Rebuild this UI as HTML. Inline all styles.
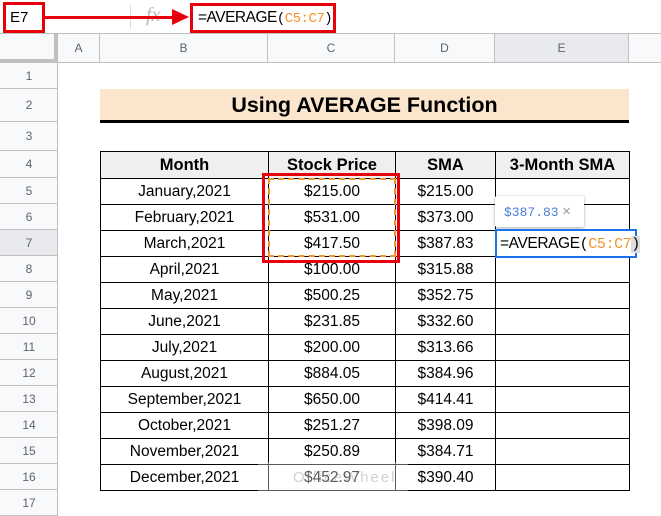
<!DOCTYPE html>
<html><head><style>
*{margin:0;padding:0;box-sizing:border-box}
body{width:661px;height:516px;overflow:hidden;background:#fff;font-family:"Liberation Sans",Arial,sans-serif;position:relative}
.a{position:absolute}
.rn{position:absolute;left:0;width:58px;text-align:center;font-size:12px;color:#5f6368;border-bottom:1px solid #c0c0c0;background:#f8f9fa}
.ch{position:absolute;top:34px;height:29px;line-height:28px;text-align:center;font-size:12px;color:#5f6368;border-right:1px solid #c0c0c0;border-bottom:1px solid #c0c0c0;background:#f8f9fa}
table{position:absolute;left:100px;top:151px;border-collapse:collapse}
td{border:1px solid #000;height:26px;text-align:center;font-size:15.5px;color:#000;padding:0}
th{border:1px solid #000;height:27px;background:#efefef;font-size:16.5px;font-weight:bold;padding:0}
.mono{font-family:"Liberation Mono",monospace}
</style></head><body>
<div class="a" style="left:0;top:0;width:661px;height:34px;border-bottom:1px solid #c0c0c0"></div>
<div class="a" style="left:3px;top:2px;width:42px;height:31px;border:3px solid #e8000b;font-size:15px;line-height:25px;padding-left:4px">E7</div>
<div class="a" style="left:113px;top:16px;width:0;height:0;border-left:3px solid transparent;border-right:3px solid transparent;border-top:3px solid #777"></div>
<div class="a" style="left:130px;top:5px;width:1px;height:24px;background:#ddd"></div>
<div class="a" style="left:146px;top:4px;font-size:20px;font-style:italic;color:#bbb;font-family:'Liberation Serif',serif">fx</div>
<div class="a" style="left:45px;top:16px;width:128px;height:3px;background:#e8000b"></div>
<div class="a" style="left:172px;top:9px;width:0;height:0;border-top:8px solid transparent;border-bottom:8px solid transparent;border-left:17px solid #e8000b"></div>
<div class="a" style="left:190px;top:3px;width:146px;height:30px;border:3px solid #e8000b;font-size:15.5px;line-height:24px;padding-left:5px;letter-spacing:-0.5px">=AVERAGE<span class="mono" style="font-size:14px">(</span><span class="mono" style="color:#f0962d;font-size:14px">C5:C7</span><span class="mono" style="font-size:14px">)</span></div>
<div class="ch" style="left:0;width:58px;border-right:4px solid #c0c0c0;border-bottom:4px solid #c0c0c0"></div>
<div class="ch" style="left:58px;width:42px">A</div>
<div class="ch" style="left:100px;width:168px">B</div>
<div class="ch" style="left:268px;width:127px">C</div>
<div class="ch" style="left:395px;width:100px">D</div>
<div class="ch" style="left:495px;width:134px;background:#e8eaed">E</div>
<div class="ch" style="left:629px;width:40px"></div>
<div class="rn" style="top:63px;height:26px;line-height:26px">1</div>
<div class="rn" style="top:89px;height:33px;line-height:33px">2</div>
<div class="rn" style="top:122px;height:29px;line-height:29px">3</div>
<div class="rn" style="top:151px;height:27px;line-height:27px">4</div>
<div class="rn" style="top:178px;height:26px;line-height:26px">5</div>
<div class="rn" style="top:204px;height:26px;line-height:26px">6</div>
<div class="rn" style="top:230px;height:26px;line-height:26px;background:#e8eaed">7</div>
<div class="rn" style="top:256px;height:26px;line-height:26px">8</div>
<div class="rn" style="top:282px;height:26px;line-height:26px">9</div>
<div class="rn" style="top:308px;height:26px;line-height:26px">10</div>
<div class="rn" style="top:334px;height:26px;line-height:26px">11</div>
<div class="rn" style="top:360px;height:26px;line-height:26px">12</div>
<div class="rn" style="top:386px;height:26px;line-height:26px">13</div>
<div class="rn" style="top:412px;height:26px;line-height:26px">14</div>
<div class="rn" style="top:438px;height:26px;line-height:26px">15</div>
<div class="rn" style="top:464px;height:26px;line-height:26px">16</div>
<div class="rn" style="top:490px;height:26px;line-height:26px">17</div>
<div class="a" style="left:57px;top:63px;width:1px;height:453px;background:#c0c0c0"></div>
<div class="a" style="left:100px;top:89px;width:529px;height:32px;background:#fce5cd;text-align:center;font-size:21.5px;font-weight:bold;line-height:33px">Using AVERAGE Function</div>
<div class="a" style="left:100px;top:120px;width:529px;height:3px;background:#000"></div>
<table>
<tr><th style="width:168px">Month</th><th style="width:127px">Stock Price</th><th style="width:100px">SMA</th><th style="width:134px">3-Month SMA</th></tr>
<tr><td>January,2021</td><td>$215.00</td><td>$215.00</td><td></td></tr>
<tr><td>February,2021</td><td>$531.00</td><td>$373.00</td><td></td></tr>
<tr><td>March,2021</td><td>$417.50</td><td>$387.83</td><td></td></tr>
<tr><td>April,2021</td><td>$100.00</td><td>$315.88</td><td></td></tr>
<tr><td>May,2021</td><td>$500.25</td><td>$352.75</td><td></td></tr>
<tr><td>June,2021</td><td>$231.85</td><td>$332.60</td><td></td></tr>
<tr><td>July,2021</td><td>$200.00</td><td>$313.66</td><td></td></tr>
<tr><td>August,2021</td><td>$884.05</td><td>$384.96</td><td></td></tr>
<tr><td>September,2021</td><td>$650.00</td><td>$414.41</td><td></td></tr>
<tr><td>October,2021</td><td>$251.27</td><td>$398.09</td><td></td></tr>
<tr><td>November,2021</td><td>$250.89</td><td>$384.71</td><td></td></tr>
<tr><td>December,2021</td><td>$452.97</td><td>$390.40</td><td></td></tr>
</table>
<div class="a" style="left:268px;top:178px;width:128px;height:79px;border:2px dashed #f0962d"></div>
<div class="a" style="left:262px;top:173px;width:138px;height:90px;border:3px solid #e8000b"></div>
<div class="a" style="left:495px;top:196px;width:89px;height:31px;background:#fff;box-shadow:0 1px 3px rgba(0,0,0,.35);border-radius:2px;font-size:13px;line-height:31px;padding-left:9px;color:#4a7fd4"><span class="mono">$387.83</span> <span style="color:#999;font-size:15px">×</span></div>
<div class="a" style="left:495px;top:229px;width:142px;height:29px;border:2px solid #1a73e8;background:#fff;font-size:15.5px;line-height:25px;padding-left:3px;letter-spacing:-0.4px">=AVERAGE<span class="mono" style="font-size:15px">(</span><span class="mono" style="color:#f0962d;font-size:15px">C5:C7</span><span class="mono" style="font-size:15px;background:#ddd">)</span></div>
<div class="a" style="left:258px;top:462px;width:150px;height:32px;background:rgba(255,255,255,.35);color:rgba(120,120,120,.35);font-size:15px;line-height:32px;padding-left:35px;letter-spacing:2px">OfficeWheel</div>
</body></html>
